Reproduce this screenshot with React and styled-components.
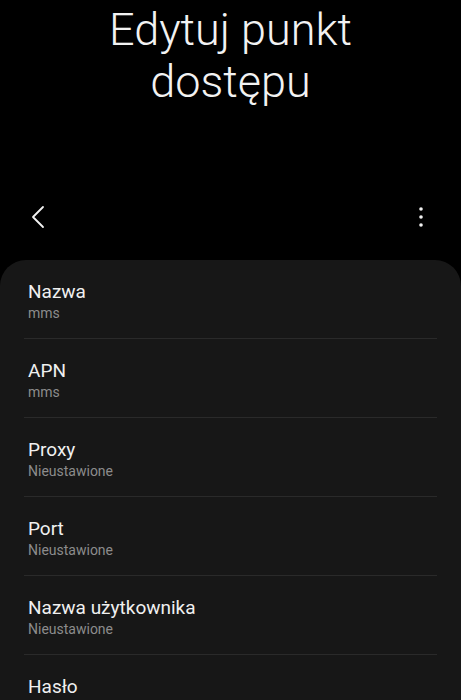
import React from 'react';
import styled, { createGlobalStyle } from 'styled-components';

const GlobalStyle = createGlobalStyle`
  * {
    margin: 0;
    padding: 0;
    box-sizing: border-box;
  }

  body {
    background-color: #000;
    font-family: Roboto, 'Noto Sans', sans-serif;
    overflow: hidden;
  }
`;

const Screen = styled.div`
  width: 461px;
  height: 700px;
  background-color: #000;
  overflow: hidden;
`;

const Title = styled.h1`
  padding-top: 4px;
  font-size: 45px;
  font-weight: 300;
  line-height: 52px;
  color: #f2f2f2;
  text-align: center;
`;

const Toolbar = styled.div`
  margin-top: 82px;
  height: 54px;
  display: flex;
  align-items: center;
  justify-content: space-between;
  padding: 0 28px 0 26px;
`;

const IconButton = styled.button`
  background: none;
  border: none;
  display: flex;
  align-items: center;
  justify-content: center;
  width: 24px;
  height: 24px;
  color: #f2f2f2;
`;

const Card = styled.div`
  margin-top: 16px;
  min-height: 500px;
  background-color: #171717;
  border-radius: 26px 26px 0 0;
`;

const Row = styled.div`
  margin: 0 24px;
  padding: 20px 4px 15px;
  border-bottom: 1px solid ${(p) => (p.$last ? 'transparent' : '#2a2a2a')};
`;

const RowTitle = styled.div`
  font-size: 19px;
  line-height: 23px;
  color: #f0f0f0;
`;

const RowValue = styled.div`
  font-size: 14px;
  line-height: 20px;
  color: #8c8c8c;
`;

const fields = [
  { label: 'Nazwa', value: 'mms' },
  { label: 'APN', value: 'mms' },
  { label: 'Proxy', value: 'Nieustawione' },
  { label: 'Port', value: 'Nieustawione' },
  { label: 'Nazwa użytkownika', value: 'Nieustawione' },
  { label: 'Hasło', value: 'Nieustawione' },
];

const BackIcon = () => (
  <svg width="14" height="24" viewBox="0 0 14 24" fill="none">
    <path d="M12 2 L2 12 L12 22" stroke="currentColor" strokeWidth="1.8" strokeLinecap="round" strokeLinejoin="round" />
  </svg>
);

const MoreIcon = () => (
  <svg width="6" height="22" viewBox="0 0 6 22" fill="currentColor">
    <circle cx="3" cy="3" r="1.8" />
    <circle cx="3" cy="11" r="1.8" />
    <circle cx="3" cy="19" r="1.8" />
  </svg>
);

const App = () => {
  return (
    <Screen>
      <GlobalStyle />
      <Title>
        Edytuj punkt
        <br />
        dostępu
      </Title>
      <Toolbar>
        <IconButton aria-label="Wstecz">
          <BackIcon />
        </IconButton>
        <IconButton aria-label="Więcej opcji">
          <MoreIcon />
        </IconButton>
      </Toolbar>
      <Card>
        {fields.map((f, i) => (
          <Row key={f.label} $last={i === fields.length - 1}>
            <RowTitle>{f.label}</RowTitle>
            <RowValue>{f.value}</RowValue>
          </Row>
        ))}
      </Card>
    </Screen>
  );
};

export default App;
